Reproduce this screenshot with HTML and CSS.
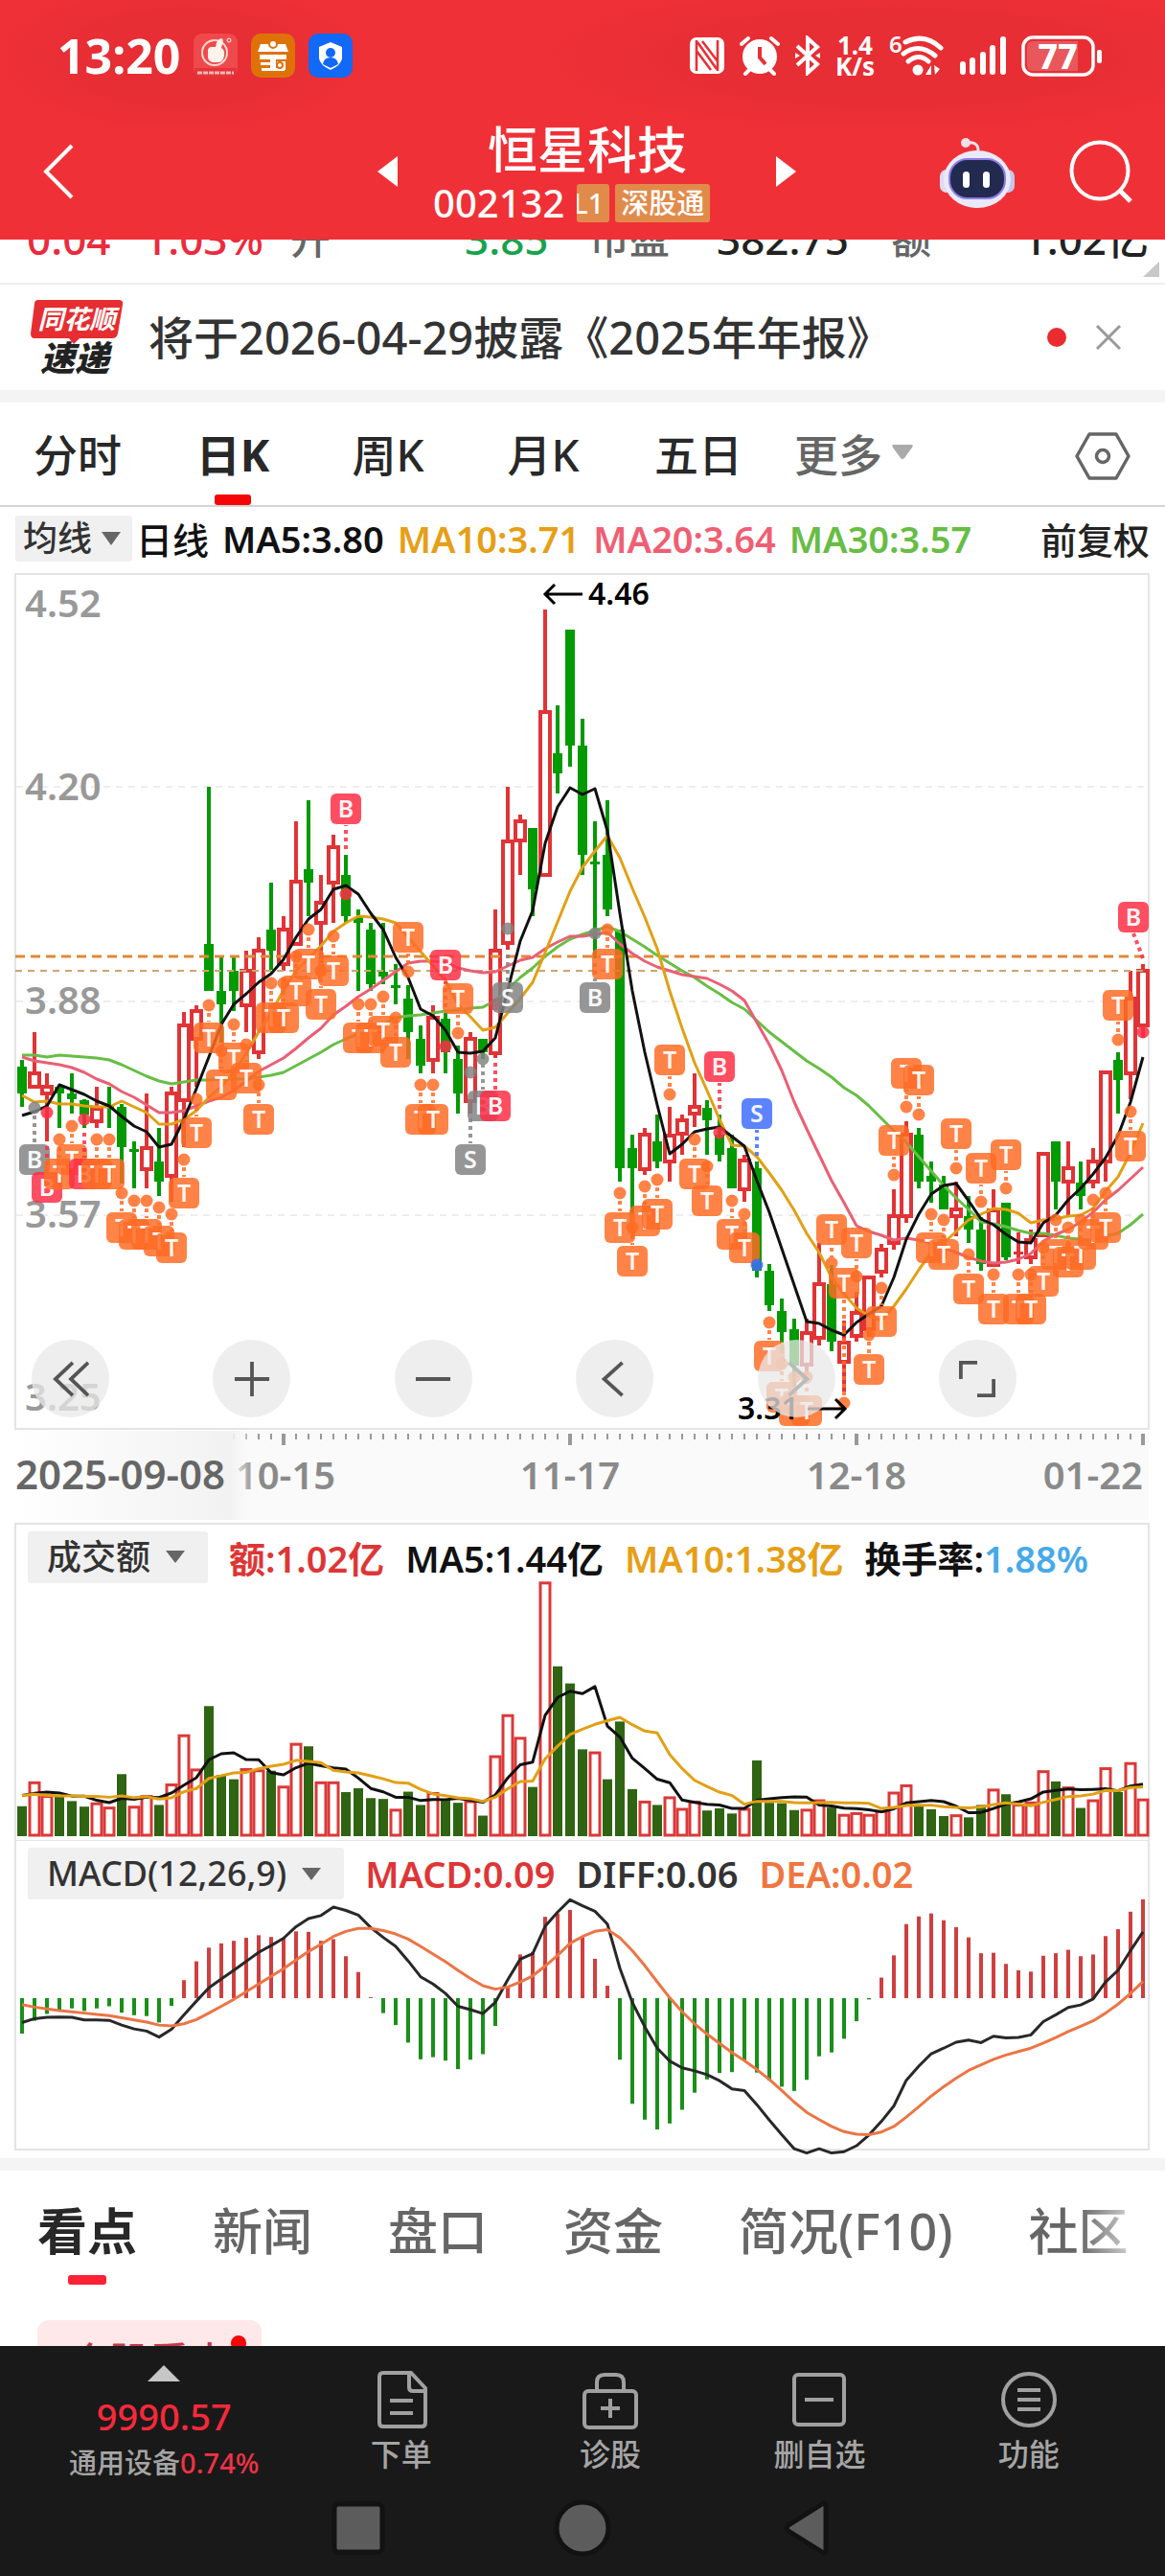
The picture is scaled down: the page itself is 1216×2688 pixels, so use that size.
FILE: index.html
```html
<!DOCTYPE html>
<html lang="zh-CN">
<head>
<meta charset="utf-8">
<meta name="viewport" content="width=device-width, initial-scale=1">
<title>恒星科技 002132</title>
<link rel="stylesheet" href="styles.css">
</head>
<body>
<div class="app">
  <header class="top">
    <div class="status">
      <div class="status-left">
        <span class="clock">13:20</span>
        <svg class="app-icon" viewBox="0 0 46 46"><rect width="46" height="46" rx="9" fill="#f0494c"/><path d="M1 36h44v3q-1 7-8 7H9q-7 0-8-7z" fill="#e5333a"/><circle cx="22" cy="20" r="13" fill="none" stroke="#ffd9d2" stroke-width="2"/><path d="M15 18q0-4 4-4h4q1-8 6-9 3 1 1 6l-1 4q4 2 3 8-1 7-6 7h-6q-5-1-5-6z" fill="#fff3ec"/><circle cx="37" cy="7" r="2" fill="none" stroke="#fff"/><path d="M4 41h38" stroke="#f9b9b5" stroke-width="3" stroke-dasharray="5 1"/></svg>
        <svg class="app-icon" viewBox="0 0 46 46"><rect width="46" height="46" rx="10" fill="#de7208"/><path d="M10 11h26l3 8H7zM9 22h28v5H9zM10 30h10v3H10zM11 36h24v3H11zM20 22h6v16h-6zM27 29h9v9h-9z" fill="#fff"/><circle cx="23" cy="11" r="4" fill="#fff" stroke="#de7208" stroke-width="2"/><circle cx="30" cy="33" r="3" fill="#fff" stroke="#de7208" stroke-width="2"/></svg>
        <svg class="app-icon" viewBox="0 0 46 46"><rect width="46" height="46" rx="10" fill="#1268f7"/><path d="M23 9l12 5v12q-1 7-12 12Q12 33 11 26V14z" fill="#fff"/><circle cx="23" cy="20" r="5" fill="#1268f7"/><path d="M15 32q1-7 8-7t8 7l-8 4z" fill="#1268f7"/></svg>
      </div>
      <div class="status-right">
        <svg width="38" height="40" viewBox="0 0 38 40"><rect x="1" y="1" width="36" height="38" rx="7" fill="#fff"/><path d="M8 4v32M30 4v32M9 6l20 28M14 5l16 21M8 15l15 20" stroke="#e93035" stroke-width="2.6" fill="none"/></svg>
        <svg width="42" height="42" viewBox="0 0 42 42"><circle cx="21" cy="22" r="18" fill="#fff"/><path d="M2 9l7-6M40 9l-7-6M6 40l5-5M36 40l-5-5" stroke="#fff" stroke-width="4" stroke-linecap="round"/><path d="M21 12v11l6 7" stroke="#e93035" stroke-width="4" fill="none"/></svg>
        <svg width="28" height="42" viewBox="0 0 28 42"><path d="M3 11l21 19-10 9V3l10 9L3 31" fill="none" stroke="#fff" stroke-width="4"/><path d="M1 18l5 3-5 3zM27 18l-5 3 5 3z" fill="#fff"/></svg>
        <span class="speed">1.4<br>K/s</span>
        <svg width="58" height="46" viewBox="0 0 58 46"><text x="0" y="20" class="six">6</text><path d="M17 9q20-10 37 6M15 21q16-12 33 2M20 29q11-9 21 0" fill="none" stroke="#fff" stroke-width="5" stroke-linecap="round"/><circle cx="30" cy="38" r="5.500" fill="#fff"/><path d="M44 33v10h-6zM47 33l6 4-5 6z" fill="#fff"/></svg>
        <svg width="50" height="42" viewBox="0 0 50 42"><path d="M4 30v8M14 26v12M25 20v18M35 13v25M46 4v34" stroke="#fff" stroke-width="6" stroke-linecap="round"/></svg>
        <svg width="86" height="44" viewBox="0 0 86 44"><rect x="2" y="3" width="73" height="39" rx="10" fill="none" stroke="#fff" stroke-width="3.500"/><path d="M12 7h47v31H12q-6 0-6-6V13q0-6 6-6z" fill="#e8575c"/><rect x="79" y="16" width="5" height="14" rx="2" fill="#fff"/><text x="38" y="36" class="battery" text-anchor="middle">77</text></svg>
      </div>
    </div>
    <div class="nav">
      <button class="icon-btn back" aria-label="返回"><svg width="36" height="60" viewBox="0 0 36 60"><path d="M31 3L4 30l27 27" fill="none" stroke="#fff" stroke-width="4"/></svg></button>
      <div class="stock">
        <button class="icon-btn" aria-label="上一只"><svg width="22" height="32" viewBox="0 0 22 32"><path d="M21 0v32L0 16z" fill="#fff"/></svg></button>
        <div class="stock-name">
          <h1>恒星科技</h1>
          <div class="code"><span>002132</span><span class="tag cut"><span>L1</span></span><span class="tag">深股通</span></div>
        </div>
        <button class="icon-btn" aria-label="下一只"><svg width="22" height="32" viewBox="0 0 22 32"><path d="M0 0v32l21-16z" fill="#fff"/></svg></button>
      </div>
      <div class="nav-right">
        <button class="icon-btn" aria-label="智能助手"><svg width="80" height="76" viewBox="0 0 80 76"><path d="M28 8q13-2 13 8" stroke="#e8e4f2" stroke-width="3" fill="none"/><circle cx="28" cy="8" r="5" fill="#f0dfe8"/><rect x="1" y="36" width="14" height="24" rx="7" fill="#dcdcf3"/><rect x="65" y="36" width="14" height="24" rx="7" fill="#c5c5ec"/><ellipse cx="40" cy="46" rx="35" ry="30" fill="#e9e9f8"/><rect x="11" y="25" width="58" height="41" rx="19" fill="#222a4f" stroke="#8d7be8" stroke-width="2"/><rect x="25" y="38" width="7" height="17" rx="3.500" fill="#fff"/><rect x="46" y="38" width="7" height="17" rx="3.500" fill="#fff"/></svg></button>
        <button class="icon-btn" aria-label="搜索"><svg width="66" height="68" viewBox="0 0 66 68"><circle cx="32" cy="33" r="29.500" fill="none" stroke="#fff" stroke-width="4"/><path d="M52 53l12 12" stroke="#fff" stroke-width="5"/></svg></button>
      </div>
    </div>
  </header>

  <section class="quote">
    <span class="up">0.04</span><span class="up">1.03%</span><span class="dim">开</span><span class="down">3.85</span><span class="dim">市盈</span><span>382.75</span><span class="dim">额</span><span class="end">1.02亿</span>
    <svg class="corner" width="17" height="16" viewBox="0 0 17 16"><path d="M17 0v16H0z" fill="#c8c8c8"/></svg>
  </section>

  <section class="notice">
    <svg class="logo" width="97" height="80" viewBox="0 0 97 80"><path d="M8 1h84q5 0 4 5l-5 30q-1 5-6 5H51l-6 6-5-6H4q-4 0-4-5L4 5q0-4 4-4z" fill="#e62d31"/><text x="48" y="31" class="logo-a" text-anchor="middle">同花顺</text><text x="46" y="75" class="logo-b" text-anchor="middle">速递</text></svg>
    <a class="notice-text" href="#">将于2026-04-29披露《2025年年报》</a>
    <i class="dot"></i>
    <button class="icon-btn" aria-label="关闭"><svg width="28" height="28" viewBox="0 0 28 28"><path d="M2 2l24 24M26 2L2 26" stroke="#999" stroke-width="3"/></svg></button>
  </section>

  <nav class="periods">
    <button>分时</button><button class="on">日K</button><button>周K</button><button>月K</button><button>五日</button><button class="more">更多<svg width="22" height="15" viewBox="0 0 22 15"><path d="M2 0h18q3 0 1 3L13 14q-2 2-4 0L1 3q-2-3 1-3z" fill="#aaa"/></svg></button>
    <button class="setting" aria-label="设置"><svg width="58" height="52" viewBox="0 0 58 52"><path d="M15 3h28l13 23-13 23H15L2 26z" fill="none" stroke="#666" stroke-width="3.500" stroke-linejoin="round"/><circle cx="29" cy="26" r="6.500" fill="none" stroke="#666" stroke-width="3.500"/></svg></button>
  </nav>

  <div class="legend price-legend">
    <button class="pick">均线<svg width="20" height="14" viewBox="0 0 20 14"><path d="M0 0h20L10 14z" fill="#666"/></svg></button>
    <b>日线</b><span>MA5:3.80</span><span class="ma10">MA10:3.71</span><span class="ma20">MA20:3.64</span><span class="ma30">MA30:3.57</span><button class="adjust">前复权</button>
  </div>

  <section class="price">
    <svg id="price" viewBox="0 598 1216 894"></svg>
    <div class="controls">
      <button aria-label="最前"><svg viewBox="0 0 40 40"><path d="M22 2L3 20l19 18M39 2L20 20l19 18"/></svg></button>
      <button aria-label="放大"><svg viewBox="0 0 40 40"><path d="M1 20h38M20 1v38"/></svg></button>
      <button aria-label="缩小"><svg viewBox="0 0 40 40"><path d="M1 20h38"/></svg></button>
      <button aria-label="向左"><svg viewBox="0 0 40 40"><path d="M28 2L8 20l20 18"/></svg></button>
      <button aria-label="向右" class="faint"><svg viewBox="0 0 40 40"><path d="M12 2l20 18-20 18"/></svg></button>
      <button aria-label="全屏"><svg viewBox="0 0 40 40"><path d="M2 20V2h18M38 20v18H20"/></svg></button>
    </div>
  </section>
  <svg id="axis" viewBox="0 1492 1216 97"></svg>

  <section class="panel">
    <div class="legend">
      <button class="pick wide">成交额<svg width="20" height="13" viewBox="0 0 20 13"><path d="M0 0h20L10 13z" fill="#666"/></svg></button>
      <span class="rise">额:1.02亿</span><span>MA5:1.44亿</span><span class="ma10">MA10:1.38亿</span><span>换手率:<em>1.88%</em></span>
    </div>
    <svg id="volume" viewBox="0 1589 1216 331"></svg>
  </section>
  <section class="panel">
    <div class="legend">
      <button class="pick wide">MACD(12,26,9)<svg width="20" height="13" viewBox="0 0 20 13"><path d="M0 0h20L10 13z" fill="#666"/></svg></button>
      <span class="rise">MACD:0.09</span><span class="diff">DIFF:0.06</span><span class="dea">DEA:0.02</span>
    </div>
    <svg id="macd" viewBox="0 1920 1216 332"></svg>
  </section>

  <nav class="tabs">
    <button class="on">看点</button><button>新闻</button><button>盘口</button><button>资金</button><button>简况(F10)</button><button>社区</button>
  </nav>
  <section class="feed"><button class="chip">个股看点<i></i></button></section>

  <footer class="bottom">
    <div class="actions">
      <button class="index"><svg width="34" height="17" viewBox="0 0 34 17"><path d="M17 0l17 17H0z" fill="#c6c6c6"/></svg><strong>9990.57</strong><span>通用设备<em>0.74%</em></span></button>
      <button><svg width="60" height="62" viewBox="0 0 60 62"><path d="M11 3h29l15 16v36q0 4-4 4H11q-4 0-4-4V7q0-4 4-4zM38 3v15q0 4 4 4h13M18 32h24M18 45h24"/></svg>下单</button>
      <button><svg width="60" height="62" viewBox="0 0 60 62"><rect x="3" y="22" width="54" height="38" rx="4"/><path d="M16 22V13q0-8 8-8h12q8 0 8 8v9M20 40h20M30 30v20"/></svg>诊股</button>
      <button><svg width="60" height="62" viewBox="0 0 60 62"><rect x="4" y="5" width="52" height="52" rx="4"/><path d="M15 31h30"/></svg>删自选</button>
      <button><svg width="60" height="62" viewBox="0 0 60 62"><circle cx="30" cy="31" r="27"/><path d="M18 21h24M18 31h24M18 41h24"/></svg>功能</button>
    </div>
    <div class="system">
      <button aria-label="最近任务"><svg width="60" height="62" viewBox="0 0 60 62"><rect x="5" y="6" width="50" height="50" rx="4"/></svg></button>
      <button aria-label="主页"><svg width="60" height="62" viewBox="0 0 60 62"><circle cx="30" cy="31" r="27"/></svg></button>
      <button aria-label="返回键"><svg width="60" height="62" viewBox="0 0 60 62"><path d="M46 6q4-3 4 2v46q0 5-4 2L11 34q-4-3 0-6z"/></svg></button>
    </div>
  </footer>
</div>
<script src="chart.js"></script>
</body>
</html>
```
FILE: styles.css
```css
* { box-sizing: border-box; }
body {
  margin: 0;
  background: #fff;
  color: #222;
  font-family: "Noto Sans", "Noto Sans CJK SC", sans-serif;
  font-weight: 500;
}
button {
  border: 0;
  padding: 0;
  background: none;
  color: inherit;
  font: inherit;
  white-space: nowrap;
}
svg { display: block; flex: none; }
em, i { font-style: normal; }
.app { width: 100%; overflow: hidden; }

/* header */
.top {
  background:
    radial-gradient(220px 90px at 190px 60px, #e62e34 40%, transparent 100%),
    radial-gradient(420px 90px at 930px 60px, #e62e34 40%, transparent 100%),
    #f03037;
  color: #fff;
  height: 250px;
}
.status {
  height: 116px;
  display: flex;
  justify-content: space-between;
  align-items: center;
  padding: 0 64px 0 60px;
}
.status-left, .status-right { display: flex; align-items: center; }
.status-left { gap: 14px; }
.status-right { gap: 15px; }
.clock { font-size: 50px; font-weight: 700; }
.app-icon { width: 46px; height: 46px; }
.speed { font-size: 26px; line-height: 22px; font-weight: 700; text-align: center; }
.six { font-size: 24px; font-weight: 600; fill: #fff; }
.battery { font-size: 36px; font-weight: 800; fill: #fff; }
.nav {
  height: 134px;
  display: grid;
  grid-template-columns: 1fr auto 1fr;
  padding: 0 34px 8px 44px;
}
.icon-btn { flex: none; line-height: 0; }
.back { justify-self: start; align-self: center; }
.stock { display: flex; align-items: center; gap: 36px; }
.stock-name { width: 322px; }
.stock h1 { margin: 0; font-size: 52px; line-height: 66px; font-weight: 500; text-align: center; }
.code { display: flex; align-items: center; gap: 6px; font-size: 40px; line-height: 46px; }
.code > span:first-child { margin-right: 7px; }
.tag {
  background: #e18b4b;
  border-radius: 3px;
  font-size: 29px;
  line-height: 40px;
  height: 40px;
  padding: 0 6px;
}
.cut { width: 34px; overflow: hidden; display: flex; justify-content: flex-end; }
.nav-right { display: flex; justify-self: end; align-items: center; gap: 56px; }

/* quote strip scrolled under the header */
.quote {
  position: relative;
  height: 47px;
  overflow: hidden;
  display: grid;
  grid-template-columns: 122fr 153fr 182fr 130fr 133fr 182fr 113fr 156fr;
  align-content: end;
  padding: 0 17px 16px 28px;
  border-bottom: 2px solid #eee;
  font-size: 44px;
  line-height: 60px;
  white-space: nowrap;
}
.up { color: #eb2b3e; }
.down { color: #17a34d; }
.dim { color: #666; font-size: 42px; }
.end { text-align: right; }
.corner { position: absolute; right: 6px; bottom: 6px; }

.notice {
  height: 110px;
  display: flex;
  align-items: center;
  padding: 0 45px 0 32px;
}
.logo-a { font: italic 700 27px "Noto Sans CJK SC", sans-serif; fill: #fff; }
.logo-b { font: italic 900 36px "Noto Sans CJK SC", sans-serif; fill: #222; }
.notice-text { flex: 1; margin-left: 26px; padding-bottom: 6px; font-size: 47px; color: #333; text-decoration: none; white-space: nowrap; }
.dot { width: 20px; height: 20px; border-radius: 50%; background: #ea2c2f; margin-right: 30px; }

/* period tabs */
.periods {
  height: 122px;
  border-top: 13px solid #f4f4f4;
  border-bottom: 2px solid #d5d5d5;
  display: flex;
  font-size: 46px;
  color: #282828;
}
.periods button { flex: 0 0 162px; position: relative; padding-bottom: 4px; }
.periods .on, .tabs .on { font-weight: 700; }
.periods .on::after {
  content: "";
  position: absolute;
  left: 50%;
  bottom: 0;
  width: 38px;
  height: 11px;
  margin-left: -19px;
  border-radius: 3px;
  background: #f50508;
}
.periods .more { color: #666; display: flex; align-items: center; justify-content: center; gap: 10px; }
.periods .setting { flex: none; margin-left: auto; margin-right: 36px; padding: 4px 0 0; }

/* chart legends */
.legend { display: flex; align-items: center; gap: 22px; font-size: 38px; font-weight: 600; color: #111; white-space: nowrap; }
.price-legend { height: 69px; padding: 0 16px 4px; gap: 14px; }
.price-legend b { font-weight: 500; margin-left: -10px; }
.pick {
  display: flex;
  align-items: center;
  background: #f0f0f0;
  border-radius: 3px;
  height: 48px;
  padding: 0 12px 0 8px;
  gap: 10px;
  font-size: 36px;
  font-weight: 500;
  line-height: 44px;
  color: #333;
}
.pick.wide { height: 54px; padding: 0 24px 0 20px; gap: 16px; }
.ma10 { color: #e69f17; }
.ma20 { color: #ef5f74; }
.ma30 { color: #67bd45; }
.rise { color: #de3636; }
.diff { color: #333; }
.dea { color: #f0763f; }
.legend em { color: #45a9ea; }
.adjust { margin-left: auto; color: #222; font-weight: 500; }

/* charts */
.price { position: relative; }
#price, #axis, #volume, #macd { width: 100%; height: auto; }
.controls {
  position: absolute;
  left: 33px;
  right: 155px;
  bottom: 13px;
  display: flex;
  justify-content: space-between;
}
.controls button {
  width: 81px;
  height: 81px;
  border-radius: 50%;
  background: rgba(232, 232, 232, .75);
  display: grid;
  place-items: center;
}
.controls svg { width: 38px; height: 38px; fill: none; stroke: #555; stroke-width: 4; }
.controls .faint svg { stroke: #bbb; }
.panel { position: relative; }
.panel .legend { position: absolute; left: 29px; top: 8px; }
.frame { fill: none; stroke: #e4e4e4; stroke-width: 2; }
.scale { font-size: 40px; fill: #999; font-weight: 600; }
.callout { font-size: 32px; fill: #000; font-weight: 600; }
.tick-label { font-size: 40px; fill: #8a8a8a; font-weight: 600; }
.tick-label.first { font-size: 42px; fill: #666; }
.mark { font-size: 25px; font-weight: 600; fill: #fff; fill-opacity: .95; text-anchor: middle; }

/* content tabs */
.tabs {
  height: 143px;
  border-top: 13px solid #f4f4f4;
  padding: 0 30px 0 39px;
  display: flex;
  gap: 79px;
  font-size: 52px;
  color: #666;
  overflow: hidden;
  position: relative;
}
.tabs::after {
  content: "";
  position: absolute;
  right: 0;
  top: 0;
  bottom: 0;
  width: 90px;
  background: linear-gradient(90deg, rgba(255, 255, 255, 0), rgba(255, 255, 255, .75) 65%);
}
.tabs button { position: relative; padding-bottom: 10px; }
.tabs .on { color: #282828; }
.tabs .on::after {
  content: "";
  position: absolute;
  left: 50%;
  bottom: 11px;
  width: 40px;
  height: 10px;
  margin-left: -20px;
  border-radius: 3px;
  background: #fd2235;
}
.feed { height: 53px; overflow: hidden; padding: 26px 39px 0; }
.chip {
  position: relative;
  display: block;
  width: 234px;
  height: 80px;
  border-radius: 12px;
  background: #ffe8ea;
  color: #c33a4a;
  font-size: 42px;
}
.chip i { position: absolute; right: 16px; top: 16px; width: 16px; height: 16px; border-radius: 50%; background: #f50508; }

/* bottom bars */
.bottom { background: #191919; color: #a5a5a5; height: 240px; }
.actions { display: flex; height: 145px; padding: 20px 33px 0; }
.actions button { flex: 218; display: flex; flex-direction: column; align-items: center; gap: 4px; font-size: 32px; line-height: 44px; }
.actions button:not(.index) { padding-top: 5px; }
.actions .index { flex: 276; gap: 0; font-size: 29px; line-height: 42px; }
.index strong { font-size: 38px; line-height: 56px; font-weight: 500; color: #f6293b; margin-top: 8px; }
.index em { color: #ee3344; }
.actions button:not(.index) svg { fill: none; stroke: #a0a0a0; stroke-width: 4; }
.system { display: flex; justify-content: center; gap: 174px; padding-top: 14px; }
.system svg { fill: #5c5c5c; stroke: #121212; stroke-width: 5; }
```
FILE: chart.js
```js
const X0 = 23, STEP = 13;
const x = i => X0 + STEP * i;
const RED = '#e03436', GREEN = '#039a03', ORANGE = '#ff6c25';

// one row per day: high, body top, body bottom, low, direction
const candles = [
  [1106,1113,1141,1155,0],[1077,1119,1135,1135,1],[1120,1133,1142,1191,1],[1133,1134,1141,1177,0],[1120,1141,1147,1162,0],
  [1147,1148,1163,1177,0],[1134,1156,1171,1177,1],[1134,1153,1156,1177,0],[1152,1155,1197,1235,0],[1191,1199,1201,1240,0],
  [1141,1197,1221,1240,1],[1177,1212,1233,1248,0],[1134,1140,1228,1254,1],[1056,1069,1149,1197,1],[1049,1054,1085,1134,1],
  [821,985,1034,1034,0],[999,1034,1048,1088,0],[999,1013,1034,1055,0],[992,1012,1050,1077,1],[978,991,1099,1105,1],
  [921,970,992,1012,0],[956,969,1007,1013,1],[857,919,986,986,1],[835,907,921,956,0],[913,941,964,1000,1],
  [871,883,922,963,1],[892,913,956,963,0],[949,957,963,1034,0],[963,970,1027,1034,0],[963,1014,1019,1027,0],
  [1006,1028,1030,1048,0],[1028,1042,1077,1105,0],[1070,1084,1112,1120,0],[1049,1061,1107,1120,1],[1057,1063,1098,1120,0],
  [1091,1105,1141,1162,0],[1077,1083,1150,1162,1],[1084,1084,1098,1105,0],[949,991,1100,1104,1],[821,877,985,991,1],
  [850,856,878,913,1],[864,864,928,956,0],[636,742,914,914,1],[736,786,807,828,0],[657,657,778,800,0],
  [750,778,892,913,0],[857,899,902,1000,0],[835,892,949,956,0],[970,970,1219,1233,0],[1184,1198,1219,1268,0],
  [1177,1183,1221,1226,1],[1163,1191,1212,1219,0],[1155,1184,1213,1233,1],[1163,1168,1184,1205,1],[1120,1154,1163,1176,1],
  [1148,1156,1169,1205,0],[1163,1184,1205,1212,0],[1184,1198,1240,1240,0],[1205,1210,1242,1254,1],[1212,1219,1326,1333,0],
  [1319,1326,1362,1368,0],[1355,1368,1390,1412,0],[1376,1387,1425,1447,0],[1376,1390,1425,1435,1],[1297,1339,1397,1404,1],
  [1320,1340,1400,1410,0],[1378,1400,1422,1452,1],[1348,1369,1395,1400,1],[1332,1332,1388,1395,1],[1298,1303,1328,1333,1],
  [1241,1268,1298,1304,1],[1170,1183,1270,1276,1],[1177,1184,1233,1240,0],[1212,1227,1233,1255,0],[1227,1236,1262,1262,0],
  [1233,1261,1270,1290,1],[1248,1269,1283,1297,0],[1270,1283,1319,1326,0],[1241,1262,1321,1321,1],[1255,1255,1312,1315,0],
  [1286,1306,1308,1319,1],[1283,1293,1313,1319,1],[1203,1203,1290,1290,1],[1191,1191,1233,1262,0],[1191,1218,1234,1268,1],
  [1212,1234,1248,1262,0],[1198,1211,1234,1240,1],[1118,1118,1213,1233,1],[1098,1106,1127,1162,0],[1013,1041,1121,1147,1],
  [1006,1012,1071,1083,1]
];

const averages = {
  '#67be45': [1101,1101,1103,1101,1102,1103,1104,1106,1111,1117,1123,1128,1131,1129,1127,1127,1126,1126,1126,1124,1122,1119,1112,1105,1098,1090,1084,1079,1075,1069,1062,1060,1059,1057,1055,1054,1052,1051,1044,1032,1020,1010,998,988,980,975,971,967,972,980,988,997,1005,1013,1020,1029,1037,1046,1053,1065,1077,1087,1097,1107,1115,1124,1135,1143,1154,1167,1180,1192,1207,1222,1237,1250,1262,1275,1277,1280,1284,1287,1287,1289,1292,1293,1294,1290,1287,1278,1267],
  '#ea5f74': [1103,1107,1109,1111,1114,1119,1126,1131,1139,1145,1153,1161,1161,1159,1154,1149,1145,1138,1128,1118,1111,1104,1094,1083,1073,1059,1050,1040,1032,1023,1014,1005,1003,1003,1004,1010,1013,1015,1014,1008,1002,999,990,983,977,977,975,973,985,995,1003,1009,1013,1017,1019,1021,1027,1034,1044,1067,1090,1117,1150,1178,1205,1232,1255,1279,1285,1289,1294,1292,1294,1297,1302,1307,1312,1316,1318,1317,1314,1308,1295,1288,1283,1275,1265,1252,1242,1230,1218],
  '#e2a015': [1143,1150,1149,1152,1152,1154,1155,1155,1149,1155,1161,1173,1173,1168,1159,1145,1134,1119,1099,1077,1057,1033,1013,1000,987,972,963,956,957,959,963,978,993,1008,1023,1048,1061,1075,1072,1057,1042,1025,994,962,930,905,888,872,895,927,957,990,1034,1073,1109,1138,1168,1195,1196,1207,1224,1242,1263,1287,1307,1333,1350,1365,1373,1378,1363,1345,1325,1307,1297,1285,1273,1267,1261,1262,1266,1276,1273,1272,1269,1268,1261,1243,1228,1203,1172],
  '#111': [1164,1160,1154,1132,1137,1142,1149,1154,1165,1175,1181,1197,1194,1168,1136,1103,1069,1048,1037,1025,1016,1001,978,959,949,928,924,933,953,970,999,1020,1053,1060,1075,1098,1099,1097,1083,1033,982,950,880,842,822,829,823,867,953,1034,1098,1153,1204,1194,1181,1178,1176,1186,1196,1232,1265,1303,1341,1379,1381,1388,1393,1380,1371,1363,1333,1293,1267,1246,1237,1235,1253,1272,1278,1288,1296,1297,1276,1268,1252,1240,1225,1208,1185,1150,1103]
};

// trade marks: day, letter, dot y, badge y, colour
const GRAY = '#838383', PINK = '#ff2d44', BLUE = '#3d6dff';
const marks = [
  [1,'B',1156,1210,GRAY],[2,'B',1161,1239,PINK],[3,'T',1189,1225],[4,'T',1175,1210],[5,'B',1168,1225,PINK],[6,'T',1189,1225],[7,'T',1189,1225],
  [8,'T',1245,1281],[9,'T',1253,1288],[10,'T',1253,1288],[11,'T',1260,1295],[12,'T',1267,1302],[13,'T',1210,1245],[14,'T',1147,1182],
  [15,'T',1049,1083],[16,'T',1097,1132],[17,'T',1069,1104],[18,'T',1090,1125],[19,'T',1132,1168],[20,'T',1026,1062],[21,'T',1026,1062],
  [22,'T',998,1034],[23,'T',970,1006],[24,'T',1013,1048],[25,'T',977,1013],[26,'B',933,844,PINK],[27,'T',1048,1083],[28,'T',1048,1083],
  [29,'T',1040,1076],[30,'T',1062,1098],[31,'T',1014,978],[32,'T',1132,1168],[33,'T',1132,1168],[34,'B',1092,1007,PINK],[35,'T',1078,1042],
  [36,'S',1119,1210,GRAY],[37,'B',1105,1154,GRAY],[38,'B',1048,1154,PINK],[39,'S',969,1041,GRAY],[46,'B',974,1041,GRAY],[47,'T',970,1006],
  [48,'T',1245,1281],[49,'T',1281,1316],[50,'T',1238,1274],[51,'T',1231,1267],[52,'T',1142,1106],[54,'T',1189,1225],[55,'T',1217,1253],
  [56,'B',1182,1113,PINK],[57,'T',1253,1288],[58,'T',1267,1302],[59,'S',1320,1162,BLUE],[60,'T',1380,1415],[61,'T',1423,1458],[62,'T',1437,1472],
  [63,'T',1437,1472],[65,'T',1318,1283],[66,'T',1464,1339],[67,'T',1332,1297],[68,'T',1393,1429],[69,'T',1344,1379],[70,'T',1226,1190],
  [71,'T',1155,1120],[72,'T',1163,1127],[73,'T',1267,1302],[74,'T',1273,1309],[75,'T',1219,1183],[76,'T',1309,1345],[77,'T',1254,1219],
  [78,'T',1330,1366],[79,'T',1240,1205],[80,'T',1330,1366],[81,'T',1330,1366],[82,'T',1302,1337],[83,'T',1273,1309],[84,'T',1281,1317],
  [85,'T',1273,1309],[86,'T',1252,1288],[87,'T',1245,1281],[88,'T',1085,1049],[89,'T',1160,1196],[90,'B',1077,957,PINK]
];

const volume = [70,127,95,95,82,69,78,68,145,70,95,73,122,237,157,304,143,133,158,155,153,117,217,210,127,127,103,112,89,87,63,104,73,102,85,78,83,48,188,284,231,115,594,397,357,203,197,133,268,110,82,73,92,65,82,60,65,53,65,177,78,77,61,63,85,67,51,55,51,60,103,120,70,63,47,50,44,73,110,98,75,80,153,128,115,66,85,160,103,172,87];
// r: turnover on a rising day, g: on a falling one
const volumeSide =
  'grrgggrrgr' + 'rgrrrgggrr' + 'grrgrrgggg' + 'rggrggrgrr' + 'rgrgggrggg' +
  'rgrrrgggrg' + 'gggrrgrrrr' + 'rrgggrggrg' + 'rrrgrgrrgr' + 'r';

const macdBars = [-83,-53,-37,-29,-24,-30,-24,-19,-34,-40,-42,-57,-18,42,86,118,128,134,141,147,143,140,156,155,134,138,98,61,2,-35,-63,-104,-143,-138,-146,-166,-144,-131,-65,25,102,108,190,198,206,143,92,29,-144,-247,-284,-307,-293,-261,-221,-190,-175,-173,-147,-174,-192,-207,-217,-191,-136,-127,-95,-54,-3,48,100,173,191,198,182,166,142,105,106,80,65,62,99,105,113,98,102,145,161,202,231];
const diff = [1210,1201,1198,1197,1198,1204,1204,1205,1216,1225,1230,1244,1226,1192,1160,1129,1108,1088,1067,1046,1030,1013,986,967,960,940,948,959,988,1011,1032,1066,1103,1120,1142,1172,1180,1189,1163,1110,1062,1049,985,952,923,937,950,980,1083,1163,1220,1270,1300,1316,1323,1332,1346,1365,1369,1402,1438,1472,1505,1515,1505,1515,1512,1498,1473,1441,1405,1345,1312,1283,1270,1256,1251,1257,1242,1246,1245,1239,1208,1192,1175,1169,1155,1115,1088,1042,998];
const dea = [1168,1174,1178,1182,1185,1188,1191,1194,1199,1204,1209,1216,1218,1213,1203,1188,1172,1156,1138,1120,1102,1084,1064,1044,1027,1009,997,990,990,995,1003,1015,1032,1050,1068,1088,1107,1124,1132,1127,1115,1101,1078,1053,1025,1009,997,993,1012,1042,1077,1115,1152,1185,1213,1237,1259,1280,1299,1320,1343,1369,1396,1420,1437,1453,1465,1471,1472,1466,1453,1431,1407,1382,1360,1340,1322,1309,1296,1286,1278,1270,1258,1245,1231,1219,1206,1188,1167,1142,1114];

const line = (ys, color, w = 3) =>
  `<polyline fill="none" stroke="${color}" stroke-width="${w}" stroke-linejoin="round" points="${ys.map((y, i) => x(i) + ',' + y).join(' ')}"/>`;
const rule = (x1, y1, x2, y2, color, w, dash) =>
  `<line x1="${x1}" y1="${y1}" x2="${x2}" y2="${y2}" stroke="${color}" stroke-width="${w}"${dash ? ` stroke-dasharray="${dash}"` : ''}/>`;

function drawPrice() {
  let s = '<path class="frame" d="M16 1491V599H1199V1491z"/>';
  for (const y of [821, 1045, 1268]) s += rule(17, y, 1198, y, '#dcdcdc', 1, '7 6');
  [['4.52', 644], ['4.20', 835], ['3.88', 1058], ['3.57', 1281], ['3.25', 1472]]
    .forEach(([t, y]) => { s += `<text class="scale" x="26" y="${y}">${t}</text>`; });
  candles.forEach(([hi, top, bot, lo, up], i) => {
    const c = up ? RED : GREEN, cx = x(i);
    s += rule(cx, hi, cx, top, c, 4) + rule(cx, bot, cx, lo, c, 4);
    if (up && bot - top > 4) s += `<rect x="${cx - 5}" y="${top + 1}" width="10" height="${bot - top - 2}" fill="#fff" stroke="${c}" stroke-width="4"/>`;
    else s += `<rect x="${cx - 5}" y="${top}" width="10" height="${Math.max(3, bot - top)}" fill="${c}"/>`;
  });
  s += rule(16, 998, 1196, 998, '#e0893a', 3, '10 6') + rule(16, 1013, 1196, 1013, '#cda56e', 2, '7 6');
  for (const c in averages) s += line(averages[c], c);
  for (const [i, t, dot, badge, color = ORANGE] of marks) {
    const above = badge < dot && i !== 66, cx = x(i), bx = Math.min(cx, 1183);
    const [hi, , , lo] = candles[i];
    const from = i === 66 ? dot : above ? Math.min(dot, hi - 6) : Math.max(dot, lo + 5);
    const edge = badge + (from < badge ? -17 : 17);
    s += `<g opacity=".84">` + rule(cx, from, bx, edge, color, 4, '4 4') +
      `<circle cx="${cx}" cy="${dot}" r="6.5" fill="${color}"/>` +
      `<rect x="${bx - 16}" y="${badge - 16}" width="32" height="32" rx="6" fill="${color}"/></g>` +
      `<text class="mark" x="${bx}" y="${badge + 9}">${t}</text>`;
  }
  s += '<path d="M608 620H569M579 610l-10 10 10 10" fill="none" stroke="#000" stroke-width="3"/><text class="callout" x="614" y="631">4.46</text>';
  s += '<path d="M843 1470h38M872 1460l10 10-10 10" fill="none" stroke="#000" stroke-width="3"/><text class="callout" x="770" y="1481">3.31</text>';
  document.getElementById('price').innerHTML = s;
}

function drawAxis() {
  let s = '<defs><linearGradient id="fade"><stop offset="0" stop-color="#fff"/><stop offset=".9" stop-color="#f2f2f2"/><stop offset="1" stop-color="#fafafa" stop-opacity="0"/></linearGradient></defs>';
  s += '<rect x="16" y="1493" width="1183" height="93" fill="#fafafa"/>';
  candles.forEach((_, i) => {
    const major = [21, 44, 67, 90].includes(i);
    s += rule(x(i), 1496, x(i), major ? 1508 : 1502, '#999', major ? 4 : 2);
  });
  s += '<text class="tick-label" x="298" y="1554" text-anchor="middle">10-15</text><text class="tick-label" x="595" y="1554" text-anchor="middle">11-17</text><text class="tick-label" x="894" y="1554" text-anchor="middle">12-18</text><text class="tick-label" x="1193" y="1554" text-anchor="end">01-22</text>';
  s += '<rect x="16" y="1493" width="250" height="93" fill="url(#fade)"/><text class="tick-label first" x="16" y="1554">2025-09-08</text>';
  document.getElementById('axis').innerHTML = s;
}

function drawVolume() {
  const base = 1916, h = v => v / 2.24;
  const mean = (n, seed) => volume.map((_, i) => i < n - 1 ? seed[i] : volume.slice(i - n + 1, i + 1).reduce((a, b) => a + b) / n);
  let s = '<path class="frame" d="M16 1920V1590H1199V1920"/>';
  volume.forEach((v, i) => {
    const y = base - h(v);
    s += volumeSide[i] === 'r'
      ? `<rect x="${x(i) - 5}" y="${y + 1}" width="10" height="${h(v) - 2}" fill="#fff" stroke="#dc3838" stroke-width="3"/>`
      : `<rect x="${x(i) - 5}" y="${y}" width="10" height="${h(v)}" fill="#2f6413"/>`;
  });
  s += line(mean(5, [95, 100, 103, 101]).map(v => base - h(v)), '#111');
  s += line(mean(10, [95, 98, 96, 94, 94, 93, 93, 91, 94]).map(v => base - h(v)), '#e2a015');
  document.getElementById('volume').innerHTML = s;
}

function drawMacd() {
  const zero = 2085;
  const y = v => zero + (v - 1153) / 2.24;
  let s = '<path class="frame" d="M16 1920V2243H1199V1920z"/>';
  macdBars.forEach((v, i) => { s += rule(x(i), zero, x(i), zero - v / 2.24, v > 0 ? '#cf3f3f' : '#1a901a', 4); });
  s += line(diff.map(y), '#282828') + line(dea.map(y), '#ec7545');
  document.getElementById('macd').innerHTML = s;
}

drawPrice();
drawAxis();
drawVolume();
drawMacd();
```
